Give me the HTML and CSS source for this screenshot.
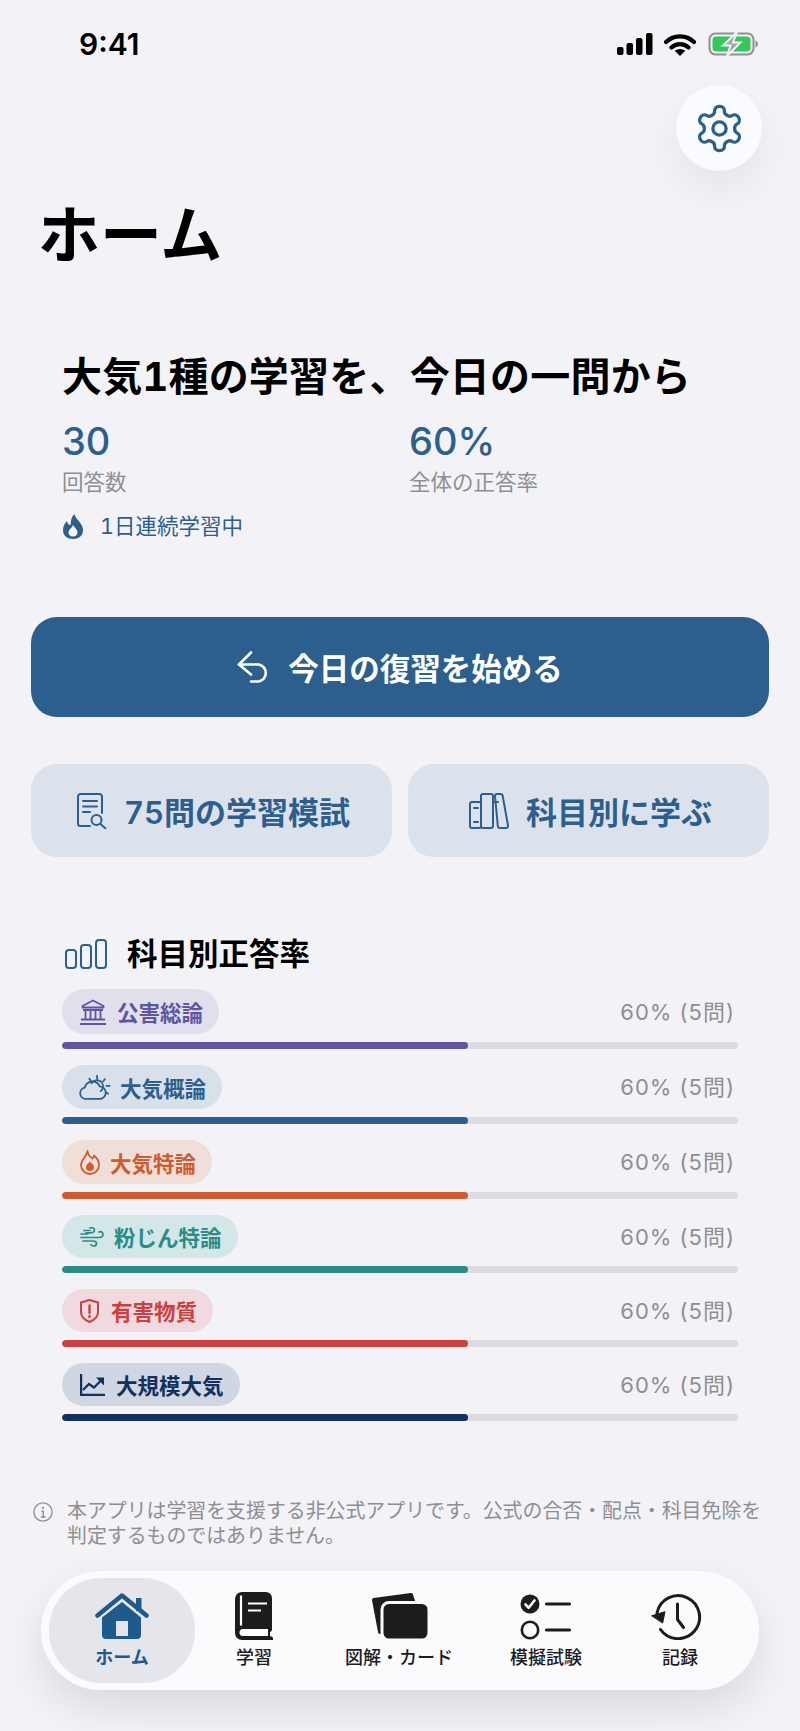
FILE: index.html
```html
<!DOCTYPE html>
<html lang="ja">
<head>
<meta charset="utf-8">
<title>ホーム</title>
<link rel="stylesheet" href="styles.css">
</head>
<body>
<div class="screen">
  <div class="status">
    <span class="time">9:41</span>
    <div class="status-icons">
      <svg class="i-signal" viewBox="0 0 36 22"><rect x="0" y="14" width="6.500" height="8" rx="2"/><rect x="9.500" y="10" width="6.500" height="12" rx="2"/><rect x="19" y="5" width="6.500" height="17" rx="2"/><rect x="29" y="0" width="6.500" height="22" rx="2"/></svg>
      <svg class="i-wifi" viewBox="0 0 32 23"><path d="M2 9A20 20 0 0 1 30 9M7.500 14.500A12.500 12.500 0 0 1 24.500 14.500" fill="none" stroke="#000" stroke-width="4.200" stroke-linecap="round"/><path d="M16 23 10.700 17.800Q16 14 21.300 17.800Z"/></svg>
      <svg class="i-batt" viewBox="0 0 50 24"><rect x="1" y="1.500" width="44" height="21" rx="6" fill="none" stroke="#8e8e93" stroke-width="2"/><path d="M47 8.500c1.500.5 2.500 2 2.500 3.500s-1 3-2.500 3.500z" fill="#8e8e93"/><rect x="4" y="4.500" width="38" height="15" rx="3.500" fill="#34c759"/><path d="M28.500 0 14.500 13.500h7.500L18.500 24 32 10.500h-7.500z" fill="#a2a2a8" stroke="#f2f2f7" stroke-width="2"/></svg>
    </div>
  </div>

  <div class="top">
    <button class="gear-btn" aria-label="設定">
      <svg class="i-gear" viewBox="0 0 24 24" fill="none" stroke="#2c5f8d" stroke-width="1.500" stroke-linejoin="round"><path d="M12.220 2h-.44a2 2 0 0 0-2 2v.18a2 2 0 0 1-1 1.730l-.43.25a2 2 0 0 1-2 0l-.15-.08a2 2 0 0 0-2.730.73l-.22.38a2 2 0 0 0 .73 2.730l.15.1a2 2 0 0 1 1 1.720v.51a2 2 0 0 1-1 1.740l-.15.09a2 2 0 0 0-.73 2.730l.22.38a2 2 0 0 0 2.730.73l.15-.08a2 2 0 0 1 2 0l.43.25a2 2 0 0 1 1 1.730V20a2 2 0 0 0 2 2h.44a2 2 0 0 0 2-2v-.18a2 2 0 0 1 1-1.730l.43-.25a2 2 0 0 1 2 0l.15.08a2 2 0 0 0 2.730-.73l.22-.39a2 2 0 0 0-.73-2.730l-.15-.08a2 2 0 0 1-1-1.740v-.5a2 2 0 0 1 1-1.740l.15-.09a2 2 0 0 0 .73-2.730l-.22-.38a2 2 0 0 0-2.730-.73l-.15.08a2 2 0 0 1-2 0l-.43-.25a2 2 0 0 1-1-1.730V4a2 2 0 0 0-2-2z"/><circle cx="12" cy="12" r="3"/></svg>
    </button>
  </div>

  <h1 class="page-title">ホーム</h1>

  <section class="hero">
    <h2 class="hero-title">大気1種の学習を、今日の一問から</h2>
    <div class="stats">
      <div class="stat"><div class="stat-num">30</div><div class="stat-label">回答数</div></div>
      <div class="stat"><div class="stat-num">60%</div><div class="stat-label">全体の正答率</div></div>
    </div>
    <div class="streak">
      <svg class="i-streak" viewBox="0 0 20 25"><path fill-rule="evenodd" d="M11.500 0C12 5 20 9 20 16 20 22 15.500 25 10 25 4.500 25 0 22 0 16 0 12 2 9 4 7 4.500 10 6 11 7.500 11 8 7 8 3 11.500 0ZM10 22.500C7 22.500 5.500 20.500 5.500 18.500 5.500 15.500 9 14 10 11 12 14 14.500 15.500 14.500 18.500 14.500 20.500 13 22.500 10 22.500Z"/></svg>
      <span>1日連続学習中</span>
    </div>
  </section>

  <button class="primary">
    <svg class="i-undo" viewBox="0 0 34 32" fill="none" stroke="#fff" stroke-width="2.600" stroke-linecap="round" stroke-linejoin="round"><path d="M14 1.500 2 13.500l12 10"/><path d="M2 13.500h20a10 9 0 0 1 0 17h-8"/></svg>
    <span>今日の復習を始める</span>
  </button>

  <div class="secondary-row">
    <button class="secondary">
      <svg class="i-doc" viewBox="0 0 30 36" fill="none" stroke="#2c5f8d" stroke-width="2" stroke-linecap="round" stroke-linejoin="round"><path d="M13 33H3.500a2.500 2.500 0 0 1-2.500-2.500v-27A2.500 2.500 0 0 1 3.500 1h19A2.500 2.500 0 0 1 25 3.500V20"/><path d="M6 8h14M6 13.500h14M6 19h7"/><circle cx="19.500" cy="27" r="5"/><path d="M23.500 31l5 4.500"/></svg>
      <span>75問の学習模試</span>
    </button>
    <button class="secondary">
      <svg class="i-books" viewBox="0 0 40 36" fill="none" stroke="#2c5f8d" stroke-width="2" stroke-linecap="round" stroke-linejoin="round"><rect x="1" y="9" width="11" height="26" rx="2"/><rect x="12" y="1" width="12" height="34" rx="2"/><path d="M26 3q0-2 2-2h3.500q2 0 2.200 2L39 32.500q.2 2.500-2 2.500h-6q-2 0-2.200-2z"/><path d="M5 15h4M5 29h4M24 9h5"/></svg>
      <span>科目別に学ぶ</span>
    </button>
  </div>

  <section class="rates">
    <div class="rates-head">
      <svg class="i-bars" viewBox="0 0 42 30" fill="none" stroke="#2c5f8d" stroke-width="2"><rect x="1" y="11" width="10" height="18" rx="3"/><rect x="16" y="6" width="10" height="23" rx="3"/><rect x="31" y="1" width="10" height="28" rx="3"/></svg>
      <h3>科目別正答率</h3>
    </div>
    <div class="rows">
      <div class="row c-purple">
        <div class="row-top">
          <span class="pill"><svg class="i-bank" viewBox="0 0 26 26" fill="none" stroke="currentColor" stroke-width="1.800" stroke-linejoin="round"><path d="M13 1.500 2.500 7v1.500h21V7z"/><path d="M3 11h20M1 20.500h24M0 25h26M5.500 11v9.500M10.500 11v9.500M15.500 11v9.500M20.500 11v9.500"/></svg>公害総論</span>
          <span class="pct">60% (5問)</span>
        </div>
        <div class="track"><div class="fill" style="width:60%"></div></div>
      </div>
      <div class="row c-blue">
        <div class="row-top">
          <span class="pill"><svg class="i-cloud" viewBox="0 0 31 24" fill="none" stroke="currentColor" stroke-width="1.700" stroke-linecap="round" stroke-linejoin="round"><path d="M7 23a5.500 5.500 0 0 1-.8-10.900A7.500 7.500 0 0 1 20.500 11a6 6 0 0 1-.5 12z"/><path d="M12.500 8a6 6 0 0 1 11 4.500 6 6 0 0 1-2 3M18 .8v2.700M10.500 3.500l1.500 2M25.500 4l-1.700 2M30 10.500h-3M28.500 18l-2-1.500"/></svg>大気概論</span>
          <span class="pct">60% (5問)</span>
        </div>
        <div class="track"><div class="fill" style="width:60%"></div></div>
      </div>
      <div class="row c-orange">
        <div class="row-top">
          <span class="pill"><svg class="i-flame" viewBox="0 0 20 25" fill="none" stroke="currentColor" stroke-width="1.800" stroke-linejoin="round"><path d="M7.500 1C8 5 10 7 12.500 8.500 13.500 7.500 14 6.500 14 5.500 17 8 19 11 19 15a9 9 0 0 1-18 0C1 9.500 6.500 7 7.500 1Z"/><path fill="currentColor" stroke="none" d="M10 21a4 4 0 0 1-4-4c0-2.500 2.500-3 3.500-5.500 2 1.500 4.500 3 4.500 5.500a4 4 0 0 1-4 4Z"/></svg>大気特論</span>
          <span class="pct">60% (5問)</span>
        </div>
        <div class="track"><div class="fill" style="width:60%"></div></div>
      </div>
      <div class="row c-teal">
        <div class="row-top">
          <span class="pill"><svg class="i-wind" viewBox="0 0 24 20" fill="none" stroke="currentColor" stroke-width="1.700" stroke-linecap="round"><path d="M1 7h6.500M4 3.500h6M10 1c2-.8 4.500 0 4.500 2s-2.500 2.800-4 2.800H6M1 10.500h18c2.500 0 4-1.300 4-3.200S21 4 19 5M3 14h10c2 0 3.500 1 3.500 2.500S15 19 13.500 19c-1.300 0-2-.6-2.500-1.300"/></svg>粉じん特論</span>
          <span class="pct">60% (5問)</span>
        </div>
        <div class="track"><div class="fill" style="width:60%"></div></div>
      </div>
      <div class="row c-red">
        <div class="row-top">
          <span class="pill"><svg class="i-shield" viewBox="0 0 19 24" fill="none" stroke="currentColor" stroke-width="2" stroke-linejoin="round"><path d="M9.500 1 18 3.500V13c0 5-3.500 8-8.500 10C4.500 21 1 18 1 13V3.500Z"/><path d="M9.500 6.500v7.500" stroke-linecap="round" stroke-width="2.400"/><circle cx="9.500" cy="17.500" r="1.400" fill="currentColor" stroke="none"/></svg>有害物質</span>
          <span class="pct">60% (5問)</span>
        </div>
        <div class="track"><div class="fill" style="width:60%"></div></div>
      </div>
      <div class="row c-navy">
        <div class="row-top">
          <span class="pill"><svg class="i-chart" viewBox="0 0 25 22" fill="none" stroke="currentColor" stroke-width="2.200"><path d="M1.100 0v20.900H25"/><path d="M3 16l6-6 5 3.500 8-8"/><path d="M16 3.500h8v8z" fill="currentColor" stroke="none"/></svg>大規模大気</span>
          <span class="pct">60% (5問)</span>
        </div>
        <div class="track"><div class="fill" style="width:60%"></div></div>
      </div>
    </div>
  </section>

  <div class="notice">
    <svg class="i-info" viewBox="0 0 22 22" fill="none" stroke="#8e8e93" stroke-width="1.500"><circle cx="11" cy="11" r="10"/><path d="M9 10h2.300v6.500M8.700 16.500h5"/><circle cx="11" cy="6.500" r="1.200" fill="#8e8e93" stroke="none"/></svg>
    <p>本アプリは学習を支援する非公式アプリです。公式の合否・配点・科目免除を判定するものではありません。</p>
  </div>

  <nav class="tabbar">
    <div class="tab active">
      <svg class="i-home" viewBox="0 0 54 48"><path d="M2.500 23.500 27 3.500l24.500 20" fill="none" stroke="#1f5a8c" stroke-width="4.500" stroke-linecap="round" stroke-linejoin="round"/><rect x="41" y="6" width="5.500" height="13" fill="#1f5a8c"/><path fill="#1f5a8c" fill-rule="evenodd" d="M27 10 46 25.500V43a4 4 0 0 1-4 4H11a4 4 0 0 1-4-4V25.500ZM21 29v15h12V29Z"/></svg>
      <span>ホーム</span>
    </div>
    <div class="tab">
      <svg class="i-book" viewBox="0 0 38 48"><path fill="#1c1c1e" d="M7 0h24a6 6 0 0 1 6 6v31c0 1.500-.5 2.500-2 3v4c1 .5 3 .5 3 2v2H7a7 7 0 0 1-7-7V7a7 7 0 0 1 7-7Z"/><path stroke="#fff" stroke-width="2.200" fill="none" d="M6 3.500v30M13 11.500h19M13 18.500h13"/><path fill="#fff" d="M8 37h25v7H8a3.500 3.500 0 0 1 0-7Z"/></svg>
      <span>学習</span>
    </div>
    <div class="tab">
      <svg class="i-cards" viewBox="0 0 58 48"><path fill="#1c1c1e" stroke="#1c1c1e" stroke-width="4" stroke-linejoin="round" d="M3 8 40 3l3 9H11v28h-2Z"/><rect x="11" y="10.500" width="47" height="37.500" rx="7" fill="#1c1c1e" stroke="#fbfbfe" stroke-width="3"/></svg>
      <span>図解・カード</span>
    </div>
    <div class="tab">
      <svg class="i-check" viewBox="0 0 52 48"><circle cx="10" cy="12" r="9.500" fill="#1c1c1e"/><path d="M5.500 12.500l3.200 3.300L14.500 8.500" fill="none" stroke="#fff" stroke-width="2.600" stroke-linecap="round" stroke-linejoin="round"/><circle cx="10" cy="38" r="8.200" fill="none" stroke="#1c1c1e" stroke-width="2.600"/><path d="M26.500 12h23M26.500 38h23" stroke="#1c1c1e" stroke-width="3.200" stroke-linecap="round"/></svg>
      <span>模擬試験</span>
    </div>
    <div class="tab">
      <svg class="i-hist" viewBox="0 0 60 48" fill="none" stroke="#1c1c1e" stroke-width="3" stroke-linecap="round" stroke-linejoin="round"><path d="M7 21A21.500 21.500 0 1 1 10.500 37.500"/><path d="M27.500 12v15.500l6 8"/><path d="M2 23.700l13-4-2.300 11z" fill="#1c1c1e" stroke-width="1"/></svg>
      <span>記録</span>
    </div>
  </nav>
</div>
</body>
</html>
```

FILE: styles.css
```css
* { box-sizing: border-box; }
html, body { margin: 0; padding: 0; }
body {
  background: #f2f2f7;
  font-family: Inter, "Noto Sans CJK JP", sans-serif;
  color: #000;
}
.screen { width: 800px; height: 1731px; overflow: hidden; }
svg { display: block; flex: none; }
button { border: 0; font: inherit; padding: 0; }

.status {
  height: 85px;
  padding: 26px 41px 0 79px;
  display: flex;
  justify-content: space-between;
  align-items: flex-start;
}
.time { font-size: 30px; line-height: 36px; font-weight: 600; }
.status-icons { display: flex; align-items: center; height: 36px; }
.i-signal { width: 36px; height: 22px; margin-right: 11px; }
.i-wifi { width: 32px; height: 23px; margin-right: 12px; }
.i-batt { width: 51px; height: 24px; }

.top { display: flex; justify-content: flex-end; padding-right: 38px; }
.gear-btn {
  width: 86px; height: 86px; border-radius: 50%;
  background: #fafbfe;
  box-shadow: 0 18px 40px rgba(0,0,0,.06);
  display: flex; align-items: center; justify-content: center;
}
.i-gear { width: 53px; height: 53px; }

.page-title {
  margin: 29px 0 0 38px;
  font-size: 62px; line-height: 72px; font-weight: 700;
}

.hero { margin-top: 81px; padding: 0 62px; }
.hero-title {
  margin: 0; font-size: 40px; line-height: 48px; font-weight: 700;
  letter-spacing: .2px;
  font-variant-numeric: tabular-nums;
}
.stats { display: flex; margin-top: 18px; }
.stat { flex: none; width: 347px; }
.stat-num { font-size: 38px; line-height: 44px; font-weight: 500; color: #2c5f8d; }
.stat-label { margin-top: 5px; font-size: 21.500px; line-height: 28px; color: #8e8e93; }
.streak {
  margin-top: 16px; display: flex; align-items: center; gap: 17px;
  padding-left: 1px;
  font-size: 21.500px; line-height: 28px; color: #2c5f8d;
  font-variant-numeric: tabular-nums;
}
.i-streak { width: 20px; height: 25px; fill: #2c5f8d; }

.primary {
  display: flex; align-items: center; justify-content: center; gap: 17px;
  width: 738px; height: 100px; margin: 77px 0 0 31px;
  background: #2c5f8d; color: #fff; border-radius: 26px;
  font-size: 30.500px; font-weight: 600;
}
.i-undo { width: 34px; height: 32px; }

.secondary-row { display: flex; gap: 16px; margin: 47px 31px 0; }
.secondary {
  flex: 1; height: 93px; border-radius: 26px;
  background: #dce2ec; color: #2c5f8d;
  display: flex; align-items: center; justify-content: center; gap: 17px;
  padding-left: 4px;
  font-size: 31px; font-weight: 600;
  font-variant-numeric: tabular-nums;
}
.i-doc { width: 30px; height: 36px; }
.i-books { width: 40px; height: 36px; }

.rates { margin-top: 77px; padding: 0 62px; }
.rates-head { display: flex; align-items: center; gap: 20px; padding-left: 3px; }
.rates-head h3 { margin: 0; font-size: 30.500px; line-height: 40px; font-weight: 700; }
.i-bars { width: 42px; height: 30px; }

.rows { margin-top: 15px; display: flex; flex-direction: column; gap: 16px; }
.row-top { display: flex; justify-content: space-between; align-items: center; height: 43px; }
.c-purple .row-top { height: 45px; }
.c-blue .row-top, .c-orange .row-top { height: 44px; }
.pill {
  display: flex; align-items: center; gap: 11px;
  height: 100%; padding: 0 16px 0 18px; border-radius: 23px;
  font-size: 21.500px; font-weight: 600;
}
.pct { font-size: 22px; letter-spacing: 1px; color: #8e8e93; padding-right: 3px; margin-bottom: 4px; }
.track { margin-top: 8px; height: 7px; border-radius: 4px; background: #dcdce0; overflow: hidden; }
.fill { height: 100%; border-radius: 4px; }

.c-purple .pill { color: #5e55a3; background: #e0dfeb; }
.c-purple .fill { background: #5e55a3; }
.c-blue .pill { color: #2c5f8d; background: #d8e0ea; }
.c-blue .fill { background: #2c5f8d; }
.c-orange .pill { color: #d15a2e; background: #f0ded9; }
.c-orange .fill { background: #d15a2e; }
.c-teal .pill { color: #2a8c88; background: #d3e6e8; }
.c-teal .fill { background: #2a8c88; }
.c-red .pill { color: #d03f3f; background: #f0dadf; }
.c-red .fill { background: #d03f3f; }
.c-navy .pill { color: #12305f; background: #d0d6e2; }
.c-navy .fill { background: #12305f; }

.i-bank { width: 26px; height: 26px; }
.i-cloud { width: 33px; height: 25px; margin-left: -2px; margin-right: -2px; }
.i-flame { width: 20px; height: 25px; margin-right: -1px; }
.i-wind { width: 24px; height: 20px; margin-right: -1px; }
.i-shield { width: 19px; height: 24px; margin-right: 1px; }
.i-chart { width: 25px; height: 22px; }

.notice {
  margin: 78px 31px 0 33px;
  display: flex; gap: 14px;
  font-size: 19.900px; line-height: 25px; color: #8e8e93;
}
.notice p { margin: 0; }
.i-info { width: 20px; height: 22px; margin-top: 2px; }

.tabbar {
  margin: 22px 0 0 41px;
  width: 718px; height: 119px; padding: 7px 6px 7px 8px;
  border-radius: 60px;
  background: #fbfbfe;
  box-shadow: 0 18px 44px rgba(0,0,0,.10);
  display: grid;
  grid-template-columns: 146px 118px 172px 122px 146px;
}
.tab {
  display: flex; flex-direction: column; align-items: center;
  padding-top: 14px; gap: 6px;
  font-size: 18px; line-height: 24px; font-weight: 500; color: #1c1c1e;
}
.tab svg { height: 48px; }
.tab.active { background: #e5e6eb; border-radius: 52px; color: #1f5a8c; font-weight: 700; }
.i-home { width: 54px; }
.i-book { width: 38px; }
.i-cards { width: 58px; margin-left: 2px; }
.i-check { width: 52px; }
.i-hist { width: 60px; }
```
